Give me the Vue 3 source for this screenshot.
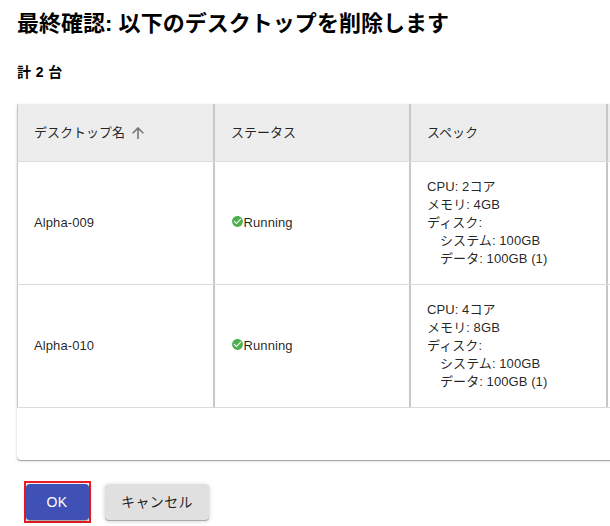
<script setup>
const columns = ['デスクトップ名', 'ステータス', 'スペック', '']
const desktops = [
  { name: 'Alpha-009', status: 'Running', cpu: '2コア', memory: '4GB', system: '100GB', data: '100GB (1)' },
  { name: 'Alpha-010', status: 'Running', cpu: '4コア', memory: '8GB', system: '100GB', data: '100GB (1)' },
]
</script>

<template>
  <main class="dialog">
    <h1 class="title">最終確認: 以下のデスクトップを削除します</h1>
    <h2 class="count">計 {{ desktops.length }} 台</h2>

    <section class="card">
      <div class="row head">
        <div v-for="(label, i) in columns" :key="i" class="cell">
          <span>{{ label }}</span>
          <svg v-if="i === 0" class="sort" viewBox="0 0 12 12">
            <path d="M6 12V1.2M0.7 6.3L6 1l5.3 5.3" />
          </svg>
        </div>
      </div>
      <div v-for="d in desktops" :key="d.name" class="row">
        <div class="cell"><span class="latin">{{ d.name }}</span></div>
        <div class="cell">
          <svg class="check" viewBox="0 0 24 24">
            <path d="M12 2C6.48 2 2 6.48 2 12s4.48 10 10 10 10-4.48 10-10S17.52 2 12 2zm-2 15l-5-5 1.41-1.41L10 14.17l7.59-7.59L19 8l-9 9z" />
          </svg>
          <span class="latin">{{ d.status }}</span>
        </div>
        <div class="cell">
          <div class="spec">
            <div>CPU: {{ d.cpu }}</div>
            <div>メモリ: {{ d.memory }}</div>
            <div>ディスク:</div>
            <div class="sub">システム: {{ d.system }}</div>
            <div class="sub">データ: {{ d.data }}</div>
          </div>
        </div>
        <div class="cell"></div>
      </div>
    </section>

    <div class="actions">
      <div class="highlight"><button class="btn primary">OK</button></div>
      <button class="btn cancel">キャンセル</button>
    </div>
  </main>
</template>

<style>
html, body { margin: 0; background: #fff; overflow: hidden; }
</style>

<style scoped>
.dialog {
  box-sizing: border-box;
  width: 610px;
  height: 526px;
  overflow: hidden;
  padding-left: 17px;
  font-family: "Liberation Sans", "Noto Sans CJK JP", sans-serif;
  color: #000;
}
.title {
  margin: 0;
  padding-top: 8px;
  height: 32px;
  line-height: 32px;
  font-size: 22px;
  font-weight: 700;
  letter-spacing: 0.03px;
  white-space: nowrap;
}
.count {
  margin: 22px 0 0;
  height: 20px;
  line-height: 20px;
  font-size: 14px;
  font-weight: 700;
  letter-spacing: 0.4px;
}
.card {
  width: 786px;
  height: 356px;
  margin-top: 22px;
  border-radius: 4px;
  color: rgba(0, 0, 0, 0.87);
  font-size: 13px;
  line-height: 18px;
  box-shadow: 0 1px 0 #aaa, 0 1px 3px rgba(0, 0, 0, 0.2);
}
.row {
  box-sizing: border-box;
  display: grid;
  grid-template-columns: 197px 196px 197px 196px;
  height: 123px;
  border-bottom: 1px solid #dcdcdc;
}
.head {
  height: 58px;
  background: #ededed;
}
.cell {
  display: flex;
  align-items: center;
  padding: 0 16px;
  border-left: 1px solid #c8c8c8;
  border-right: 1px solid #c8c8c8;
}
.sort {
  width: 12px;
  height: 12px;
  margin: 1px 0 0 7px;
  fill: none;
  stroke: #757575;
  stroke-width: 1.6;
}
.check {
  width: 13px;
  height: 13px;
  margin: -4px -0.5px 0 0;
  fill: #4caf50;
}
.latin { letter-spacing: 0.1px; }
.spec { letter-spacing: 0.08px; }
.sub { padding-left: 13px; }
.actions {
  display: flex;
  align-items: flex-start;
  gap: 14px;
  padding: 21px 0 0 7px;
}
.highlight {
  border: 2px solid #ed1c24;
  padding: 1px 0 0;
  height: 37px;
}
.btn {
  display: block;
  box-sizing: border-box;
  width: 104px;
  height: 36px;
  margin-top: 3px;
  padding: 0;
  border: 0;
  border-radius: 4px;
  background: #e0e0e0;
  color: rgba(0, 0, 0, 0.87);
  font-family: inherit;
  font-size: 14px;
  letter-spacing: 0.4px;
  box-shadow: 0 1px 0 #aaa, 0 1px 4px rgba(0, 0, 0, 0.22);
}
.cancel { padding-bottom: 2px; }
.primary {
  width: 63px;
  margin-top: 0;
  padding-right: 1px;
  background: #3f51b5;
  color: #fff;
}
</style>
